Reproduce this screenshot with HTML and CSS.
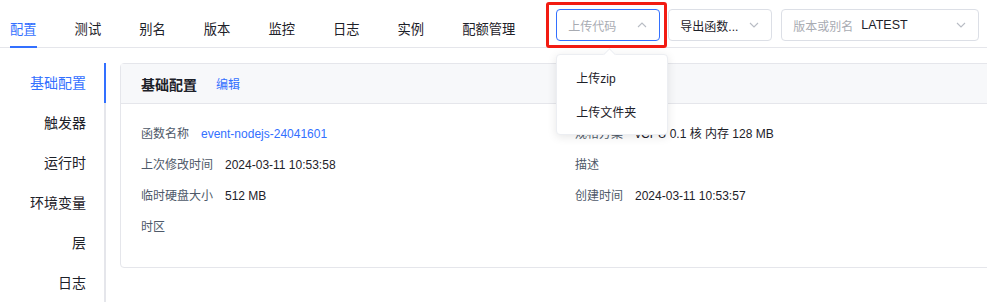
FILE: index.html
```html
<!DOCTYPE html>
<html lang="zh-CN">
<head>
    <meta charset="UTF-8" />
    <title>函数详情 - 配置</title>
    <meta name="viewport" content="width=device-width, initial-scale=1" />
    <link rel="stylesheet" href="styles.css">
</head>
<body>
    <header class="topbar">
        <nav class="tabs">
            <a class="tab active">配置</a>
            <a class="tab">测试</a>
            <a class="tab">别名</a>
            <a class="tab">版本</a>
            <a class="tab">监控</a>
            <a class="tab">日志</a>
            <a class="tab">实例</a>
            <a class="tab">配额管理</a>
        </nav>

        <div class="actions">
            <div class="upload">
                <button class="btn btn-open">
                    <span class="placeholder">上传代码</span>
                    <svg class="chevron" width="12" height="12" viewBox="0 0 12 12"><polyline points="2,8 6,4 10,8" /></svg>
                </button>
                <span class="highlight"></span>
                <div class="menu">
                    <span class="menu-arrow"></span>
                    <div class="menu-item">上传zip</div>
                    <div class="menu-item">上传文件夹</div>
                </div>
            </div>
            <button class="btn btn-export">
                <span>导出函数...</span>
                <svg class="chevron" width="12" height="12" viewBox="0 0 12 12"><polyline points="2,4 6,8 10,4" /></svg>
            </button>
            <div class="btn select">
                <span class="placeholder">版本或别名</span>
                <span class="select-value">LATEST</span>
                <svg class="chevron" width="12" height="12" viewBox="0 0 12 12"><polyline points="2,4 6,8 10,4" /></svg>
            </div>
        </div>
    </header>

    <main class="layout">
        <aside class="sidenav">
            <a class="side-item active">基础配置</a>
            <a class="side-item">触发器</a>
            <a class="side-item">运行时</a>
            <a class="side-item">环境变量</a>
            <a class="side-item">层</a>
            <a class="side-item">日志</a>
        </aside>

        <section class="card">
            <div class="card-head">
                <h2>基础配置</h2>
                <a class="link">编辑</a>
            </div>
            <div class="card-body">
                <div class="col">
                    <div class="row"><span class="label">函数名称</span><a class="link">event-nodejs-24041601</a></div>
                    <div class="row"><span class="label">上次修改时间</span><span class="value">2024-03-11 10:53:58</span></div>
                    <div class="row"><span class="label">临时硬盘大小</span><span class="value">512 MB</span></div>
                    <div class="row"><span class="label">时区</span></div>
                </div>
                <div class="col">
                    <div class="row"><span class="label">规格方案</span><span class="value">vCPU 0.1 核 内存 128 MB</span></div>
                    <div class="row"><span class="label">描述</span></div>
                    <div class="row"><span class="label">创建时间</span><span class="value">2024-03-11 10:53:57</span></div>
                </div>
            </div>
        </section>
    </main>
</body>
</html>
```

FILE: styles.css
```css
body {
    margin: 0;
    height: 100vh;
    font-family: "Liberation Sans", "Noto Sans CJK SC", sans-serif;
    background-color: #ffffff;
    color: #1d2129;
    overflow: hidden;
}

a {
    cursor: pointer;
}

.topbar {
    display: flex;
    align-items: flex-start;
    height: 47px;
    border-bottom: 1px solid #e5e6eb;
    padding-left: 10px;
}

.tabs {
    display: flex;
    gap: 38px;
    height: 48px;
}

    .tabs .tab {
        display: flex;
        align-items: flex-end;
        height: 48px;
        line-height: 20px;
        padding-bottom: 6px;
        box-sizing: border-box;
        font-size: 13.3px;
        color: #1d2129;
        border-bottom: 2px solid transparent;
    }

        .tabs .tab.active {
            color: #3370ff;
            border-bottom-color: #3370ff;
        }

.actions {
    display: flex;
    gap: 8px;
    margin-left: 41px;
    margin-top: 9px;
}

.btn {
    display: flex;
    align-items: center;
    justify-content: space-between;
    height: 32px;
    box-sizing: border-box;
    padding: 0 11px;
    border: 1px solid #dcdfe6;
    border-radius: 4px;
    background: #ffffff;
    font-family: inherit;
    font-size: 12px;
    color: #1d2129;
}

    .btn .placeholder {
        color: #a8abb2;
    }

.chevron {
    fill: none;
    stroke: #b8bcc4;
    stroke-width: 1.1;
}

.upload {
    position: relative;
}

.btn-open {
    width: 104px;
    border-color: #3370ff;
}

.highlight {
    position: absolute;
    left: -10px;
    top: -7px;
    right: -7px;
    bottom: -7px;
    border: 3px solid #f21b12;
    border-radius: 3px;
    pointer-events: none;
}

.menu {
    position: absolute;
    left: 0;
    top: 45px;
    width: 112px;
    box-sizing: border-box;
    padding: 7px 0 4px;
    background: #ffffff;
    border: 1px solid #eceef2;
    border-radius: 4px;
    box-shadow: 0 2px 10px rgba(0, 0, 0, 0.1);
    z-index: 5;
}

    .menu .menu-arrow {
        position: absolute;
        top: -5px;
        left: 48px;
        width: 8px;
        height: 8px;
        background: #ffffff;
        border-left: 1px solid #eceef2;
        border-top: 1px solid #eceef2;
        transform: rotate(45deg);
    }

    .menu .menu-item {
        height: 34px;
        line-height: 34px;
        padding-left: 19px;
        font-size: 12px;
        color: #1d2129;
    }

.btn-export {
    width: 104px;
}

.select {
    width: 198px;
    margin-left: 1px;
    justify-content: flex-start;
}

    .select .select-value {
        margin-left: 8px;
        font-size: 12.5px;
    }

    .select .chevron {
        margin-left: auto;
    }

.layout {
    display: flex;
    align-items: flex-start;
    padding-top: 15px;
}

.sidenav {
    flex: none;
    display: flex;
    flex-direction: column;
    width: 104px;
    border-right: 2px solid #e5e6eb;
}

    .sidenav .side-item {
        height: 40px;
        line-height: 40px;
        text-align: right;
        padding-right: 18px;
        font-size: 14px;
        color: #1d2129;
        margin-right: -2px;
        border-right: 2px solid transparent;
    }

        .sidenav .side-item.active {
            color: #3370ff;
            border-right-color: #3370ff;
        }

.card {
    flex: none;
    width: 900px;
    margin-left: 14px;
    border: 1px solid #e5e6eb;
    border-radius: 4px;
}

.card-head {
    display: flex;
    align-items: center;
    gap: 19px;
    height: 39px;
    padding-left: 20px;
    background: #f7f8fa;
    border-bottom: 1px solid #e5e6eb;
}

    .card-head h2 {
        margin: 0;
        font-size: 14px;
        font-weight: 700;
    }

.link {
    color: #3370ff;
    font-size: 12px;
}

.card-body {
    display: grid;
    grid-template-columns: 434px 434px;
    padding: 20px 20px 30px;
}

.row {
    display: flex;
    gap: 12px;
    height: 20px;
    line-height: 20px;
    margin-bottom: 11px;
    font-size: 12px;
}

    .row:last-child {
        margin-bottom: 0;
    }

.label {
    color: #4e5969;
}

.value {
    color: #1d2129;
}
```
